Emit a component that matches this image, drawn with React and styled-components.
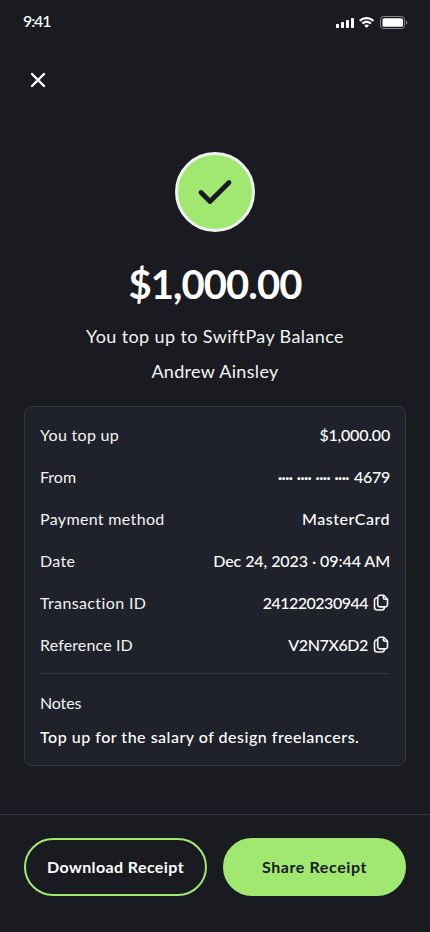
import React from "react";
import styled, { createGlobalStyle } from "styled-components";

const GlobalStyle = createGlobalStyle`
  * {
    box-sizing: border-box;
  }

  body {
    margin: 0;
    background: #1a1b20;
    color: #fff;
    font-family: Lato, "Liberation Sans", sans-serif;
  }
`;

const Screen = styled.div`
  display: flex;
  flex-direction: column;
  width: 430px;
  height: 932px;
  background: #1a1b20;
`;

const StatusBar = styled.header`
  display: flex;
  align-items: center;
  justify-content: space-between;
  height: 44px;
  padding: 0 22px 0 23px;
`;

const Time = styled.span`
  padding-bottom: 2px;
  font-size: 16px;
  font-weight: 500;
  line-height: 20px;
  letter-spacing: ${({ $spacing }) => $spacing}px;
`;

const StatusIcons = styled.svg`
  display: block;
`;

const NavBar = styled.nav`
  display: flex;
  align-items: center;
  height: 72px;
  padding-left: 24px;
`;

const CloseButton = styled.button`
  display: grid;
  place-items: center;
  width: 28px;
  height: 28px;
  padding: 0;
  border: 0;
  background: none;
  color: #fff;
`;

const Summary = styled.section`
  display: flex;
  flex-direction: column;
  align-items: center;
  padding-top: 36px;
`;

const SuccessBadge = styled.div`
  display: grid;
  place-items: center;
  width: 80px;
  height: 80px;
  border: 3px solid #f1eff2;
  border-radius: 50%;
  background: #a1e871;
`;

const Amount = styled.h1`
  margin: 26px 0 0;
  font-size: 40px;
  font-weight: 700;
  line-height: 52px;
  letter-spacing: ${({ $spacing }) => $spacing}px;
`;

const Caption = styled.p`
  margin: ${({ $top }) => $top}px 0 0;
  color: #f3f3f3;
  font-size: 18px;
  line-height: 24px;
  letter-spacing: ${({ $spacing }) => $spacing}px;
`;

const Card = styled.section`
  height: 360px;
  margin: 23px 24px 0;
  padding: 17px 15px;
  border: 1px solid #35383f;
  border-radius: 8px;
  background: #1f222a;
`;

const Rows = styled.div`
  display: flex;
  flex-direction: column;
  gap: 20px;
`;

const Row = styled.div`
  display: flex;
  align-items: center;
  justify-content: space-between;
  height: 22px;
`;

const Label = styled.span`
  color: #f3f3f3;
  font-size: 16px;
  line-height: 22px;
  letter-spacing: ${({ $spacing }) => $spacing}px;
`;

const Value = styled.span`
  display: flex;
  align-items: center;
  font-size: 16px;
  font-weight: 500;
  line-height: 22px;
  letter-spacing: ${({ $spacing }) => $spacing}px;
`;

const MaskedDigits = styled.span`
  margin-right: 5px;
  font-size: 15px;
  font-weight: 700;
  letter-spacing: ${({ $spacing }) => $spacing}px;
  word-spacing: 1.2px;
`;

const CopyButton = styled.button`
  display: block;
  width: 16px;
  height: 20px;
  margin: 0 1px 0 5px;
  padding: 0;
  border: 0;
  background: none;
  color: #f5f5f5;

  svg {
    display: block;
  }
`;

const Notes = styled.div`
  display: flex;
  flex-direction: column;
  gap: 12px;
  margin-top: 17px;
  padding-top: 18px;
  border-top: 1px solid #35383f;
`;

const Footer = styled.footer`
  display: flex;
  gap: 16px;
  height: 118px;
  margin-top: auto;
  padding: 23px 24px 0;
  border-top: 1px solid #35383f;
`;

const Button = styled.button`
  flex: 1;
  height: 58px;
  padding: 0 0 2px;
  border: 2px solid #a1e871;
  border-radius: 29px;
  background: ${({ $filled }) => ($filled ? "#a1e871" : "transparent")};
  color: ${({ $filled }) => ($filled ? "#181a20" : "#fff")};
  font-family: inherit;
  font-size: 16px;
  font-weight: 700;
  letter-spacing: ${({ $spacing }) => $spacing}px;
`;

const details = [
  { label: "You top up", value: "$1,000.00", track: [0.3, -0.2] },
  { label: "From", value: "4679", masked: true, track: [0, -0.25] },
  { label: "Payment method", value: "MasterCard", track: [0.34, 0.5] },
  { label: "Date", value: "Dec 24, 2023 · 09:44 AM", track: [0.3, -0.07] },
  { label: "Transaction ID", value: "241220230944", copy: true, track: [0.37, -0.5] },
  { label: "Reference ID", value: "V2N7X6D2", copy: true, track: [0.14, -0.4] }
];

function CopyIcon() {
  return (
    <svg
      width="16"
      height="20"
      viewBox="0 0 16 20"
      fill="none"
      stroke="currentColor"
      strokeWidth="1.6"
      strokeLinecap="round"
      strokeLinejoin="round"
    >
      <path d="M10.7 2.3H7.1a2.4 2.4 0 0 0-2.4 2.4v6.8a2.4 2.4 0 0 0 2.4 2.4h5a2.4 2.4 0 0 0 2.4-2.4V6.2z" />
      <path d="M10.4 2.6v2.2a1.5 1.5 0 0 0 1.5 1.5h2.3" />
      <path d="M4.4 4.7a2.6 2.6 0 0 0-2.9 2.6v6.9a2.8 2.8 0 0 0 2.8 2.8h4.5a2.7 2.7 0 0 0 2.6-2.5" />
    </svg>
  );
}

function Status() {
  return (
    <StatusBar>
      <Time $spacing={-1.1}>9:41</Time>
      <StatusIcons width="72" height="14" viewBox="0 0 72 14" fill="#fff">
        <rect x="0" y="9" width="3" height="4" rx="0.8" />
        <rect x="5" y="7" width="3" height="6" rx="0.8" />
        <rect x="10" y="5" width="3" height="8" rx="0.8" />
        <rect x="15" y="3" width="3" height="10" rx="0.8" />
        <g transform="translate(23 2)">
          <path d="M7.6 2.3c2.2 0 4.2.8 5.8 2.3.1.1.3.1.4 0L15 3.5c.1-.2.1-.3 0-.5-4.1-3.9-10.7-3.9-14.8 0-.1.2-.1.3 0 .5l1.2 1.1c.1.1.3.1.4 0 1.600-1.500 3.700-2.300 5.800-2.300z" />
          <path d="M7.6 6c1.2 0 2.3.4 3.2 1.2.1.1.3.1.5 0l1.1-1.2c.2-.1.2-.3 0-.5-2.7-2.5-6.9-2.5-9.6 0-.1.2-.1.4 0 .5L4 7.2c.1.1.3.1.4 0C5.300 6.400 6.400 6 7.600 6z" />
          <path d="M9.9 8.6c.1-.1.1-.3 0-.4-1.3-1.1-3.3-1.1-4.6 0-.1.1-.1.3 0 .4l2.1 2.1c.1.1.3.1.4 0z" />
        </g>
        <rect x="44.5" y="1.5" width="24" height="12" rx="3" fill="none" stroke="#85868a" />
        <rect x="46.5" y="3.2" width="20.5" height="8.6" rx="1.6" />
        <path d="M70 5.5v4c.8-.3 1.3-1.1 1.3-2s-.5-1.7-1.3-2z" fill="#85868a" />
      </StatusIcons>
    </StatusBar>
  );
}

function DetailRow({ label, value, masked, copy, track }) {
  return (
    <Row>
      <Label $spacing={track[0]}>{label}</Label>
      <Value $spacing={track[1]}>
        {masked && <MaskedDigits $spacing={-0.5}>···· ···· ···· ····</MaskedDigits>}
        {value}
        {copy && (
          <CopyButton aria-label={`Copy ${label}`}>
            <CopyIcon />
          </CopyButton>
        )}
      </Value>
    </Row>
  );
}

function App() {
  return (
    <>
      <GlobalStyle />
      <Screen>
        <Status />
        <NavBar>
          <CloseButton aria-label="Close">
            <svg width="16" height="16" viewBox="0 0 16 16">
              <path
                d="M2 2l12 12M14 2L2 14"
                stroke="currentColor"
                strokeWidth="2.4"
                strokeLinecap="round"
              />
            </svg>
          </CloseButton>
        </NavBar>
        <Summary>
          <SuccessBadge>
            <svg width="36" height="28" viewBox="0 0 36 28" fill="none">
              <path
                d="M4 14.5l9 9L32 4.5"
                stroke="#1a1b22"
                strokeWidth="4.8"
                strokeLinecap="round"
                strokeLinejoin="round"
              />
            </svg>
          </SuccessBadge>
          <Amount $spacing={-0.9}>$1,000.00</Amount>
          <Caption $top={14} $spacing={0.38}>
            You top up to SwiftPay Balance
          </Caption>
          <Caption $top={11} $spacing={0.32}>
            Andrew Ainsley
          </Caption>
        </Summary>
        <Card>
          <Rows>
            {details.map(detail => (
              <DetailRow key={detail.label} {...detail} />
            ))}
          </Rows>
          <Notes>
            <Label $spacing={-0.15}>Notes</Label>
            <Value $spacing={0.51}>Top up for the salary of design freelancers.</Value>
          </Notes>
        </Card>
        <Footer>
          <Button $spacing={0.4}>Download Receipt</Button>
          <Button $filled $spacing={0.6}>
            Share Receipt
          </Button>
        </Footer>
      </Screen>
    </>
  );
}

export default App;
